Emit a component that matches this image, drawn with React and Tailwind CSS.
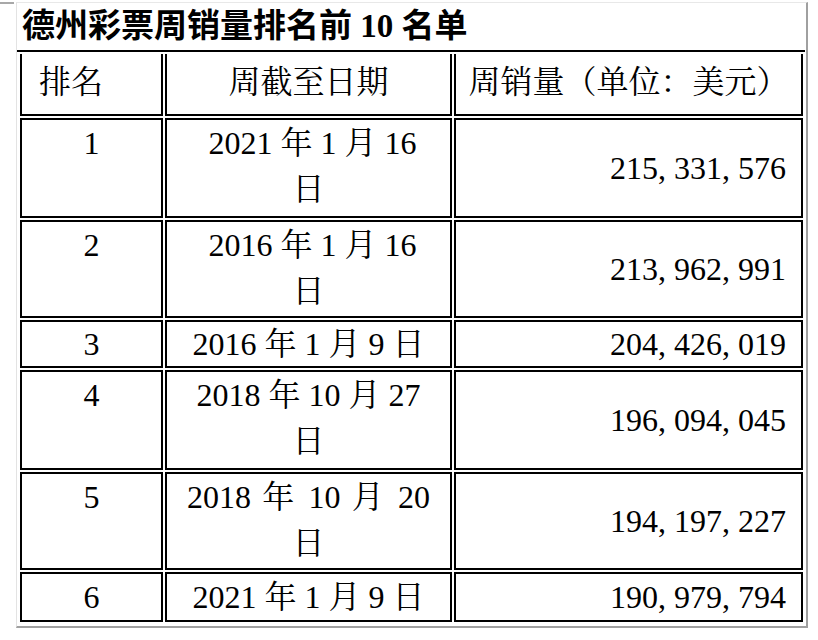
import React from 'react';

const rows = [
  { rank: '1', date: '\u00a02021 年 1 月 16 日', sales: '215,331,576' },
  { rank: '2', date: '\u00a02016 年 1 月 16 日', sales: '213,962,991' },
  { rank: '3', date: '2016 年 1 月 9 日', sales: '204,426,019', single: true },
  { rank: '4', date: '2018 年 10 月 27 日', sales: '196,094,045' },
  { rank: '5', date: '2018 年 10 月 20 日', sales: '194,197,227', justify: true },
  { rank: '6', date: '2021 年 1 月 9 日', sales: '190,979,794', single: true },
];

const serif = "font-['Liberation_Serif','Noto_Serif_CJK_SC','Noto_Sans_CJK_SC',serif]";

// comma gets a little room after it, like the half-width comma in the original
const Sales = ({ value }) => {
  const parts = value.split(',');
  return (
    <span>
      {parts.map((p, i) => (
        <React.Fragment key={i}>
          {p}
          {i < parts.length - 1 && <span className="tracking-[8px]">,</span>}
        </React.Fragment>
      ))}
    </span>
  );
};

const App = () => {
  return (
    <div className={`relative h-[640px] w-[818px] bg-white text-black ${serif}`}>
      <div className="absolute left-0 top-0 h-[2px] w-[14px] bg-[#a8a8a8]" />

      <div className="ml-[16px] mt-[2px] h-[626px] w-[792px] border-b-2 border-l border-r-2 border-t border-b-[#a0a0a0] border-l-[#e3e3e3] border-r-[#a0a0a0] border-t-[#e8e8e8]">
        <div className="flex h-[47px] items-center pl-[5px] text-[33px] font-bold leading-none font-['Liberation_Serif','Noto_Sans_CJK_SC',sans-serif]">
          德州彩票周销量排名前 10 名单
        </div>
        <div className="mr-[1px] h-[2px] bg-black" />

        <div className="ml-[3px] mt-[2px] grid grid-cols-[143px_287px_349px] grid-rows-[62px_100px_98px_48px_100px_98px_50px] gap-[2px] text-[32px]">
          {/* header */}
          <div className="flex items-center border-x-2 border-b-2 border-black pb-[4px] pl-[17px]">
            排名
          </div>
          <div className="flex items-center justify-center border-x-2 border-b-2 border-black pb-[4px]">
            周截至日期
          </div>
          <div className="flex items-center justify-center border-x-2 border-b-2 border-black pb-[4px]">
            周销量（单位：美元）
          </div>

          {rows.map((r) => (
            <React.Fragment key={r.rank}>
              <div
                className={
                  r.single
                    ? 'flex items-center justify-center border-2 border-black leading-[44px]'
                    : 'border-2 border-black text-center leading-[46px]'
                }
              >
                {r.rank}
              </div>
              <div
                className={
                  r.single
                    ? 'flex items-center justify-center border-2 border-black leading-[44px]'
                    : r.justify
                      ? 'border-2 border-black px-[20px] text-justify leading-[46px] [text-align-last:center]'
                      : 'border-2 border-black px-[20px] text-center leading-[46px]'
                }
              >
                {r.date}
              </div>
              <div className="flex items-center justify-end border-2 border-black pr-[15px] leading-[44px]">
                <Sales value={r.sales} />
              </div>
            </React.Fragment>
          ))}
        </div>
      </div>
    </div>
  );
};

export default App;
